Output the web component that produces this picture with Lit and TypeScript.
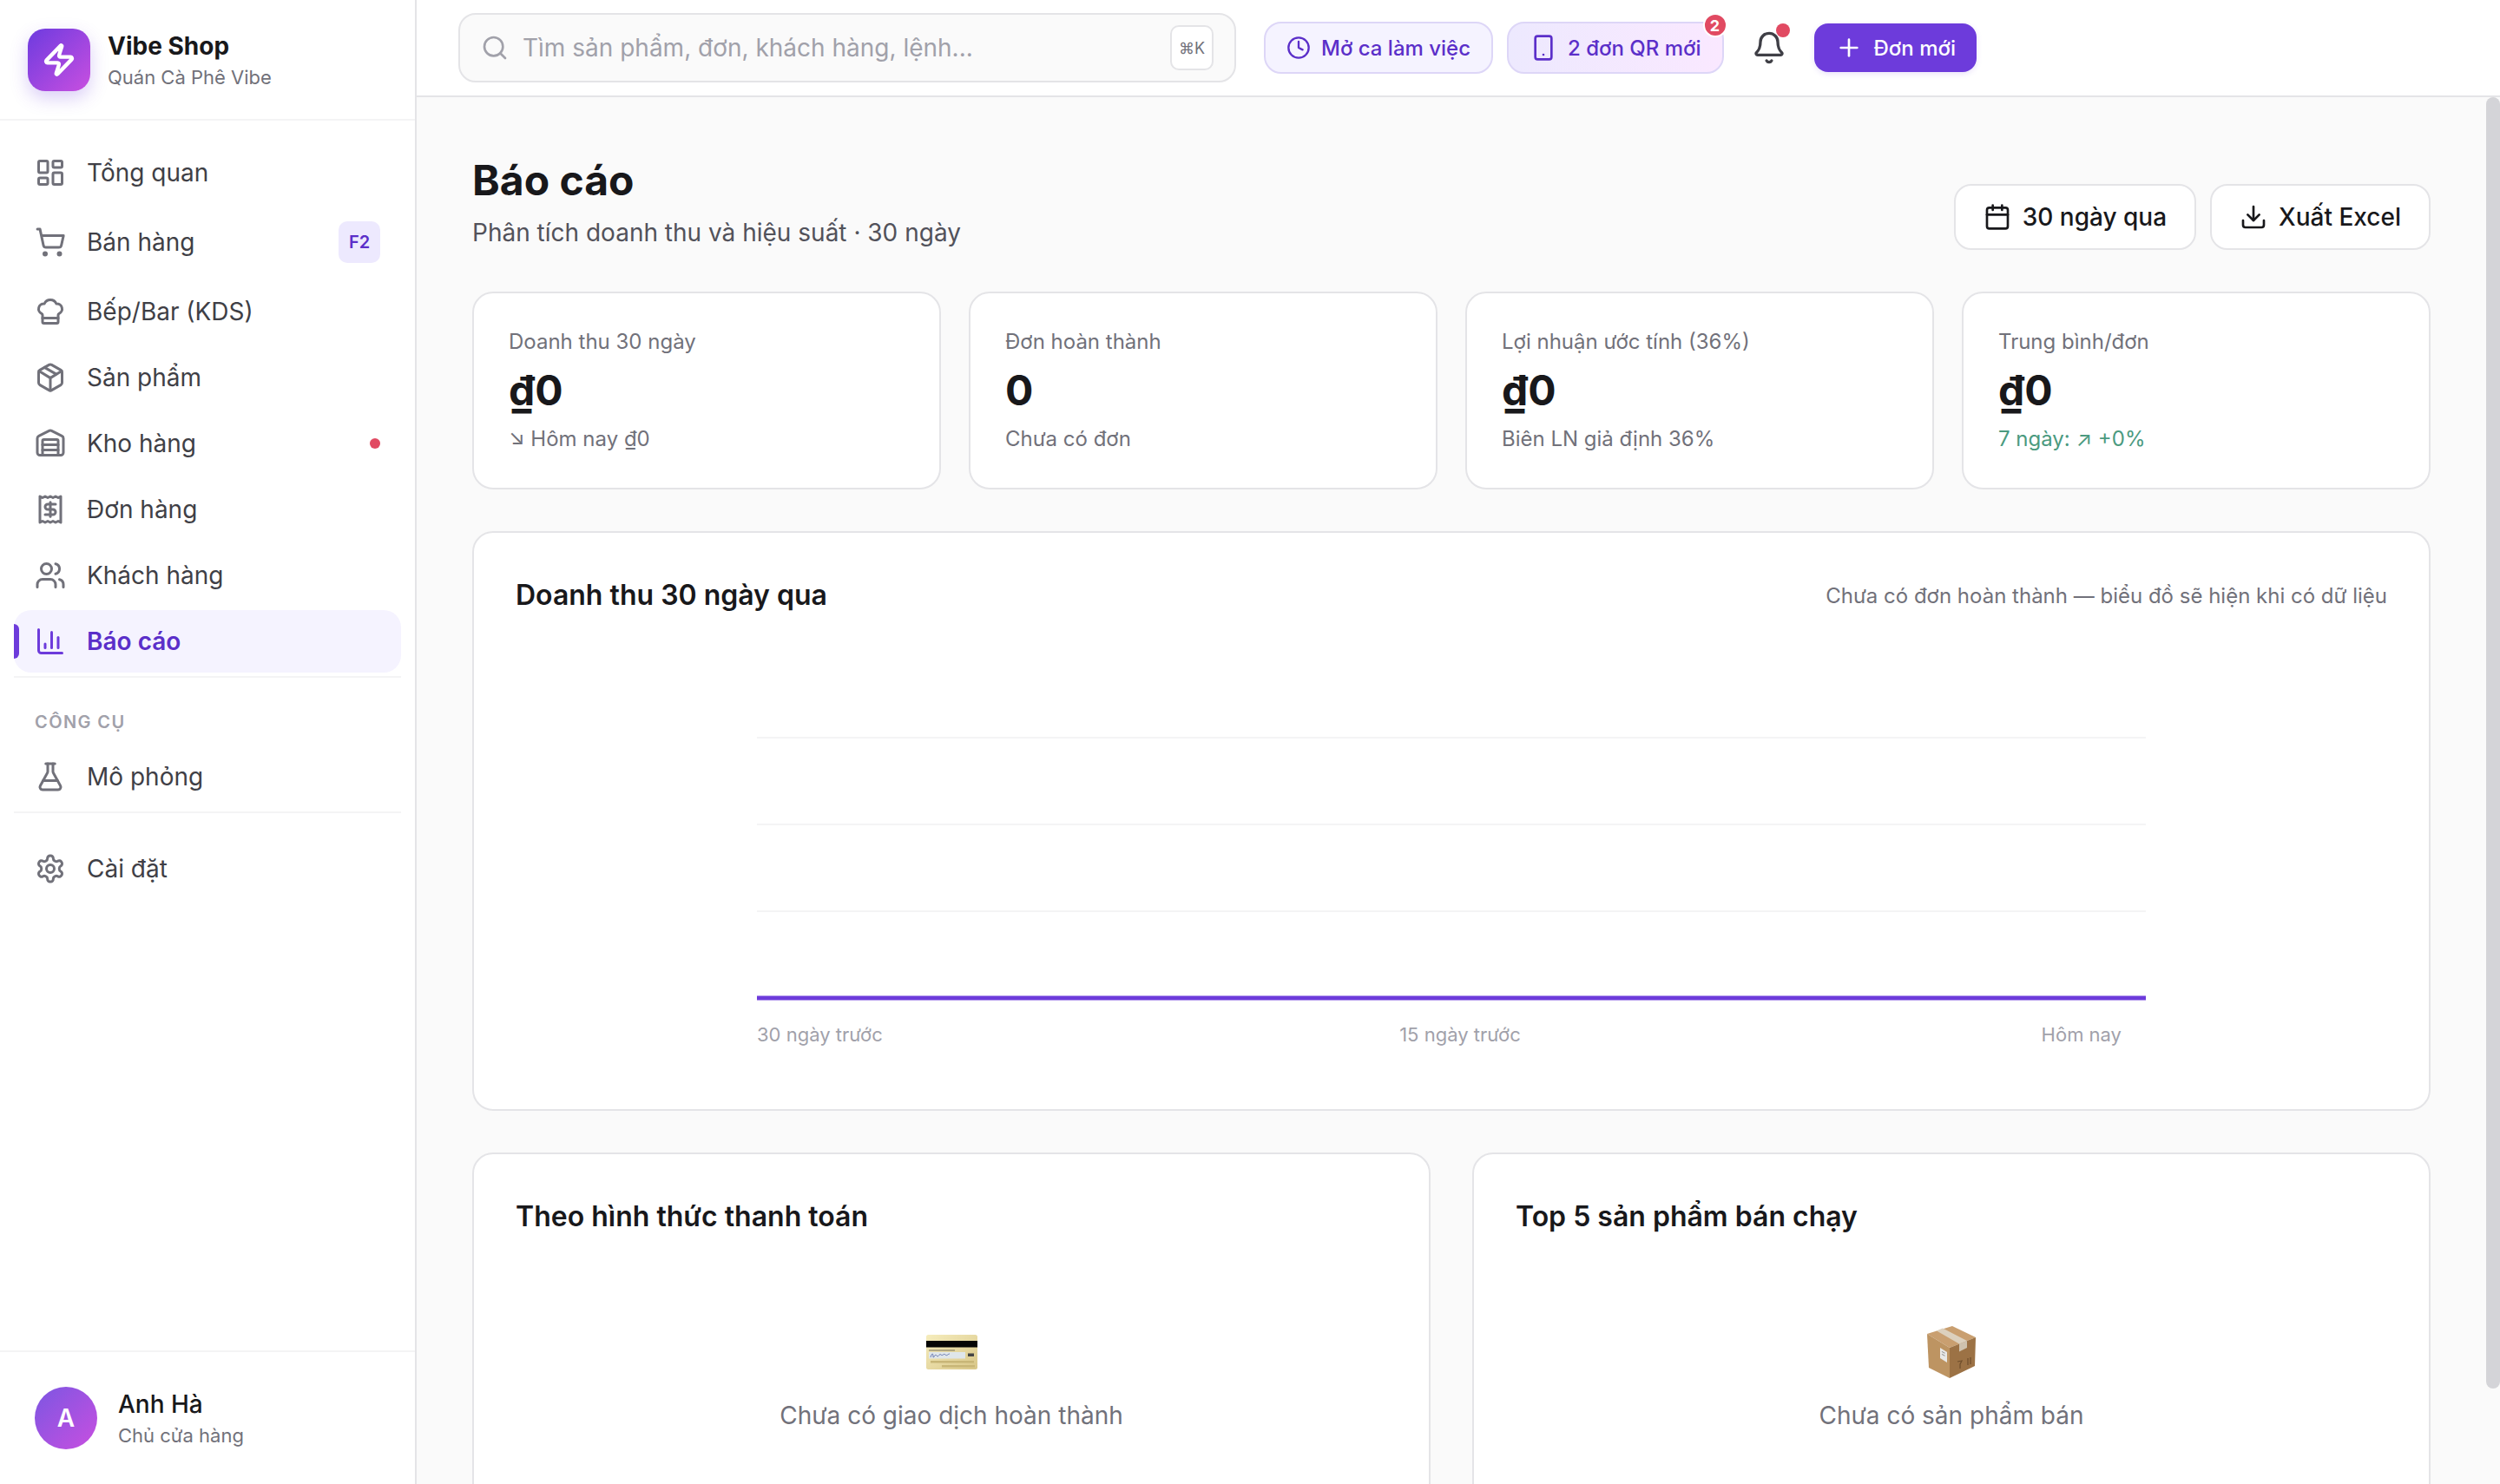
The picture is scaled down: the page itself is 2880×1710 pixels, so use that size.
import { LitElement, html, css, svg } from "lit";
import { customElement } from "lit/decorators.js";

const ic: Record<string, unknown> = {
  dash: svg`<rect x="3" y="3" width="7" height="9" rx="1"/><rect x="14" y="3" width="7" height="5" rx="1"/><rect x="14" y="12" width="7" height="9" rx="1"/><rect x="3" y="16" width="7" height="5" rx="1"/>`,
  cart: svg`<circle cx="8" cy="21" r="1"/><circle cx="19" cy="21" r="1"/><path d="M2.05 2.05h2l2.66 12.42a2 2 0 0 0 2 1.58h9.78a2 2 0 0 0 1.95-1.57l1.65-7.43H5.12"/>`,
  chef: svg`<path d="M17 21a1 1 0 0 0 1-1v-5.35c0-.457.316-.844.727-1.041a4 4 0 0 0-2.134-7.589 5 5 0 0 0-9.186 0 4 4 0 0 0-2.134 7.588c.411.198.727.585.727 1.041V20a1 1 0 0 0 1 1Z"/><path d="M6 17h12"/>`,
  pkg: svg`<path d="M11 21.73a2 2 0 0 0 2 0l7-4A2 2 0 0 0 21 16V8a2 2 0 0 0-1-1.73l-7-4a2 2 0 0 0-2 0l-7 4A2 2 0 0 0 3 8v8a2 2 0 0 0 1 1.73z"/><path d="M12 22V12"/><path d="m3.3 7 7.703 4.734a2 2 0 0 0 1.994 0L20.7 7"/><path d="m7.5 4.27 9 5.15"/>`,
  ware: svg`<path d="M18 21V10a1 1 0 0 0-1-1H7a1 1 0 0 0-1 1v11"/><path d="M22 19a2 2 0 0 1-2 2H4a2 2 0 0 1-2-2V8a2 2 0 0 1 1.132-1.803l7.95-3.974a2 2 0 0 1 1.837 0l7.948 3.974A2 2 0 0 1 22 8z"/><path d="M6 13h12"/><path d="M6 17h12"/>`,
  rcpt: svg`<path d="M4 2v20l2-1 2 1 2-1 2 1 2-1 2 1 2-1 2 1V2l-2 1-2-1-2 1-2-1-2 1-2-1-2 1Z"/><path d="M16 8h-6a2 2 0 1 0 0 4h4a2 2 0 1 1 0 4H8"/><path d="M12 17.5v-11"/>`,
  users: svg`<path d="M16 21v-2a4 4 0 0 0-4-4H6a4 4 0 0 0-4 4v2"/><circle cx="9" cy="7" r="4"/><path d="M22 21v-2a4 4 0 0 0-3-3.87"/><path d="M16 3.13a4 4 0 0 1 0 7.75"/>`,
  chart: svg`<path d="M3 3v16a2 2 0 0 0 2 2h16"/><path d="M18 17V9"/><path d="M13 17V5"/><path d="M8 17v-3"/>`,
  flask: svg`<path d="M14 2v6a2 2 0 0 0 .245.96l5.51 10.08A2 2 0 0 1 18 22H6a2 2 0 0 1-1.755-2.96l5.51-10.08A2 2 0 0 0 10 8V2"/><path d="M6.453 15h11.094"/><path d="M8.5 2h7"/>`,
  gear: svg`<path d="M12.22 2h-.44a2 2 0 0 0-2 2v.18a2 2 0 0 1-1 1.73l-.43.25a2 2 0 0 1-2 0l-.15-.08a2 2 0 0 0-2.73.73l-.22.38a2 2 0 0 0 .73 2.73l.15.1a2 2 0 0 1 1 1.72v.51a2 2 0 0 1-1 1.74l-.15.09a2 2 0 0 0-.73 2.73l.22.38a2 2 0 0 0 2.73.73l.15-.08a2 2 0 0 1 2 0l.43.25a2 2 0 0 1 1 1.73V20a2 2 0 0 0 2 2h.44a2 2 0 0 0 2-2v-.18a2 2 0 0 1 1-1.73l.43-.25a2 2 0 0 1 2 0l.15.08a2 2 0 0 0 2.73-.73l.22-.39a2 2 0 0 0-.73-2.73l-.15-.08a2 2 0 0 1-1-1.74v-.5a2 2 0 0 1 1-1.74l.15-.09a2 2 0 0 0 .73-2.73l-.22-.38a2 2 0 0 0-2.73-.73l-.15.08a2 2 0 0 1-2 0l-.43-.25a2 2 0 0 1-1-1.73V4a2 2 0 0 0-2-2z"/><circle cx="12" cy="12" r="3"/>`,
  zap: svg`<path d="M4 14a1 1 0 0 1-.78-1.63l9.9-10.2a.5.5 0 0 1 .86.46l-1.92 6.02A1 1 0 0 0 13 10h7a1 1 0 0 1 .78 1.63l-9.9 10.2a.5.5 0 0 1-.86-.46l1.92-6.02A1 1 0 0 0 11 14z"/>`,
  search: svg`<path d="m21 21-4.34-4.34"/><circle cx="11" cy="11" r="8"/>`,
  clock: svg`<circle cx="12" cy="12" r="10"/><path d="M12 6v6l4 2"/>`,
  phone: svg`<rect x="5" y="2" width="14" height="20" rx="2"/><path d="M12 18h.01"/>`,
  bell: svg`<path d="M10.268 21a2 2 0 0 0 3.464 0"/><path d="M3.262 15.326A1 1 0 0 0 4 17h16a1 1 0 0 0 .74-1.673C19.41 13.956 18 12.499 18 8A6 6 0 0 0 6 8c0 4.499-1.411 5.956-2.738 7.326"/>`,
  plus: svg`<path d="M5 12h14"/><path d="M12 5v14"/>`,
  cal: svg`<path d="M8 2v4"/><path d="M16 2v4"/><rect x="3" y="4" width="18" height="18" rx="2"/><path d="M3 10h18"/>`,
  down: svg`<path d="M12 15V3"/><path d="M21 15v4a2 2 0 0 1-2 2H5a2 2 0 0 1-2-2v-4"/><path d="m7 10 5 5 5-5"/>`,
};

const icon = (name: string, size = 36, sw = 2) => html`<svg class="ico" width=${size} height=${size} viewBox="0 0 24 24" fill="none" stroke="currentColor" stroke-width=${sw} stroke-linecap="round" stroke-linejoin="round">${ic[name]}</svg>`;

const cardEmoji = html`<svg class="emoji" width="72" height="72" viewBox="0 0 72 72" aria-hidden="true">
  <defs><linearGradient id="cg" x1="0" y1="0" x2="1" y2="1"><stop offset="0" stop-color="#f6edbd"/><stop offset="1" stop-color="#d8c688"/></linearGradient></defs>
  <rect x="7" y="16" width="59" height="40" rx="2.5" fill="url(#cg)"/>
  <rect x="7" y="23" width="59" height="7.5" fill="#050505"/>
  <rect x="10" y="33.5" width="30" height="1" fill="#77705a"/>
  <rect x="10" y="36" width="42" height="7.5" fill="#dfe6ea"/>
  <path d="M12 42c1.5-5 3-5 3-1s2-4 4-1 3-3 5-1 3-2 5 0 3-1 5-1" fill="none" stroke="#5a6ba8" stroke-width=".9"/>
  <rect x="55" y="37.5" width="7" height="3.5" fill="#444"/>
  <rect x="12" y="46" width="50" height="2.5" fill="#c8b677"/>
  <rect x="25" y="51" width="38" height="2.5" fill="#c8b677"/>
</svg>`;

const boxEmoji = html`<svg class="emoji" width="72" height="72" viewBox="0 0 72 72" aria-hidden="true">
  <polygon points="8,15 37,6 64,19 34,31" fill="#c99f70"/>
  <polygon points="8,15 34,31 34,66 10,54" fill="#bd9462"/>
  <polygon points="34,31 64,19 63,52 34,66" fill="#9c7245"/>
  <polygon points="19,11.5 26,8.5 54,23 45,26.6" fill="#dcd0bd"/>
  <polygon points="45,26.6 54,23 54,31 45,35.6" fill="#cfc2ae"/>
  <polygon points="23,31 31,36 31,48 23,43" fill="#e8e8e6"/>
  <rect x="25" y="36" width="4" height="1" fill="#8f8f8f" transform="rotate(30 27 36)"/>
  <rect x="25" y="39" width="4" height="1" fill="#8f8f8f" transform="rotate(30 27 39)"/>
  <path d="M43 47l5-1-2 4v5M55 43v8M58 42v8" fill="none" stroke="#6f4e2c" stroke-width="1.2"/>
</svg>`;

@customElement("app-root")
export class AppRoot extends LitElement {
  static styles = css`
    :host { display: flex; height: 100vh; overflow: hidden; font-family: Inter, "Liberation Sans", sans-serif; color: #18181b; background: #fafafa; }
    * { box-sizing: border-box; }
    .ico { display: block; flex: none; }
    .sidebar { width: 480px; flex: none; height: 100%; background: #fff; border-right: 2px solid #e4e4e7; display: flex; flex-direction: column; }
    .brand { height: 139px; flex: none; padding: 33px 32px 0; display: flex; gap: 20px; border-bottom: 2px solid #f4f4f5; }
    .logo { width: 72px; height: 72px; border-radius: 20px; background: linear-gradient(135deg, #6d3bdf, #c84fe0); box-shadow: 0 8px 20px rgba(109, 59, 223, .25); color: #fff; display: flex; align-items: center; justify-content: center; }
    .brand-name { font-size: 28px; font-weight: 700; line-height: 38px; margin-top: 1px; }
    .brand-sub { font-size: 22px; color: #71717a; line-height: 30px; margin-top: 2px; }
    nav { padding: 24px 16px 0; display: flex; flex-direction: column; }
    .row { position: relative; display: flex; align-items: center; gap: 24px; padding: 16px 24px; margin-bottom: 4px; border-radius: 20px; font-size: 28px; line-height: 40px; color: #3f3f46; }
    .row .ico { color: #71717a; }
    .row.active { background: #f5f3ff; color: #5b2fc9; font-weight: 600; }
    .row.active .ico { color: #6d3bdb; }
    .row.active::before { content: ""; position: absolute; left: 0; top: 16px; bottom: 16px; width: 6px; border-radius: 0 6px 6px 0; background: #6d3bdb; }
    .badge { margin-left: auto; width: 48px; height: 48px; border-radius: 10px; background: #ede9fe; color: #5b2fc9; font-size: 20px; font-weight: 600; display: flex; align-items: center; justify-content: center; }
    .dot { margin-left: auto; width: 12px; height: 12px; border-radius: 50%; background: #e14a62; }
    .nav-div { height: 2px; background: #f4f4f5; flex: none; }
    .nav-div.spaced { margin-bottom: 28px; }
    .group { font-size: 20px; font-weight: 600; letter-spacing: 1.4px; color: #a1a1aa; padding: 0 24px; line-height: 28px; margin: 37px 0 13px; }
    .user { margin-top: auto; height: 154px; flex: none; border-top: 2px solid #f4f4f5; padding: 40px 40px 0; display: flex; gap: 24px; }
    .avatar { width: 72px; height: 72px; border-radius: 50%; background: linear-gradient(135deg, #7c56e2, #c84fe0); color: #fff; font-size: 28px; font-weight: 600; display: flex; align-items: center; justify-content: center; }
    .user-name { font-size: 28px; font-weight: 500; line-height: 40px; }
    .user-role { font-size: 22px; color: #71717a; line-height: 32px; }

    .col { flex: 1; min-width: 0; display: flex; flex-direction: column; height: 100%; position: relative; }
    .topbar { height: 112px; flex: none; background: #fff; border-bottom: 2px solid #e4e4e7; padding: 0 48px; display: flex; align-items: center; }
    .search { width: 896px; height: 80px; flex: none; border: 2px solid #e4e4e7; background: #fafafa; border-radius: 20px; display: flex; align-items: center; padding: 0 24px; gap: 16px; color: #a1a1aa; font-size: 28px; }
    .search .ph { flex: 1; }
    kbd { font-family: inherit; width: 50px; height: 52px; border: 2px solid #e4e4e7; background: #fff; border-radius: 10px; font-size: 18px; color: #71717a; display: flex; align-items: center; justify-content: center; }
    .pills { display: flex; align-items: center; gap: 16px; margin-left: 32px; }
    .pill { height: 60px; border-radius: 20px; border: 2px solid #ddd6f7; background: #f5f3ff; color: #5b2fc9; font-size: 24px; font-weight: 500; display: flex; align-items: center; gap: 12px; padding: 0 24px; position: relative; white-space: nowrap; }
    .pill.qr { background: linear-gradient(90deg, #ede9fe, #fae8ff); }
    .count { position: absolute; top: -12px; right: -6px; width: 28px; height: 28px; border-radius: 50%; border: 2px solid #fff; background: #e14a62; color: #fff; font-size: 18px; font-weight: 700; display: flex; align-items: center; justify-content: center; }
    .bell { width: 72px; height: 72px; position: relative; display: flex; align-items: center; justify-content: center; color: #3f3f46; }
    .bell i { position: absolute; top: 8px; right: 12px; width: 16px; height: 16px; border-radius: 50%; background: #e14a62; }
    .new { height: 56px; border-radius: 16px; background: #6d3bdb; color: #fff; font-size: 24px; font-weight: 500; display: flex; align-items: center; gap: 13px; padding: 0 24px; box-shadow: 0 2px 6px rgba(109, 59, 219, .15); white-space: nowrap; }

    .main { flex: 1; min-height: 0; overflow: hidden; background: #fafafa; padding: 65px 80px 64px 64px; }
    .thumb { position: absolute; right: 0; top: 112px; width: 16px; height: 1488px; background: #d4d4d8; border-radius: 8px; }
    .head { display: flex; justify-content: space-between; align-items: flex-end; margin-bottom: 48px; }
    h1 { margin: 0; font-size: 48px; font-weight: 700; line-height: 62px; }
    .sub { font-size: 28px; line-height: 40px; color: #52525b; margin-top: 9px; }
    .actions { display: flex; gap: 16px; }
    .btn { height: 76px; border: 2px solid #e4e4e7; background: #fff; border-radius: 20px; padding: 0 32px; display: flex; align-items: center; gap: 14px; font-size: 28px; font-weight: 500; white-space: nowrap; }
    .btn .ico { margin-right: -1px; }
    .kpis { display: grid; grid-template-columns: repeat(4, 1fr); gap: 32px; margin-bottom: 48px; }
    .kpi { height: 228px; background: #fff; border: 2px solid #e4e4e7; border-radius: 24px; padding: 40px; }
    .kpi-l { font-size: 24px; line-height: 32px; color: #71717a; }
    .kpi-v { font-size: 48px; font-weight: 700; line-height: 60px; margin-top: 10px; }
    .kpi-s { font-size: 24px; line-height: 34px; color: #71717a; margin-top: 9px; }
    .kpi-s.up { color: #4b9a7f; }
    .card { background: #fff; border: 2px solid #e4e4e7; border-radius: 24px; padding: 48px; }
    .card-h { display: flex; justify-content: space-between; align-items: center; }
    h2 { margin: 0; font-size: 32px; font-weight: 600; line-height: 48px; }
    .hint { font-size: 24px; color: #71717a; }
    .chart { height: 668px; margin-bottom: 48px; }
    .plot { display: block; margin: 0 auto; }
    .plot text { font-family: Inter, "Liberation Sans", sans-serif; font-size: 22px; fill: #a1a1aa; }
    .two { display: grid; grid-template-columns: 1fr 1fr; gap: 48px; }
    .empty { padding: 96px 0; display: flex; flex-direction: column; align-items: center; gap: 17px; color: #71717a; font-size: 28px; line-height: 40px; }
    .emoji { display: block; }
  `;

  private navItem(icn: string, label: string, extra: unknown = null, active = false) {
    return html`<div class="row ${active ? "active" : ""}">${icon(icn)}<span>${label}</span>${extra}</div>`;
  }

  private kpi(label: string, value: string, sub: string, up = false) {
    return html`<div class="kpi"><div class="kpi-l">${label}</div><div class="kpi-v">${value}</div><div class="kpi-s ${up ? "up" : ""}">${sub}</div></div>`;
  }

  render() {
    return html`
      <aside class="sidebar">
        <div class="brand">
          <div class="logo">${icon("zap", 40, 2.6)}</div>
          <div><div class="brand-name">Vibe Shop</div><div class="brand-sub">Quán Cà Phê Vibe</div></div>
        </div>
        <nav>
          ${this.navItem("dash", "Tổng quan")}
          ${this.navItem("cart", "Bán hàng", html`<span class="badge">F2</span>`)}
          ${this.navItem("chef", "Bếp/Bar (KDS)")}
          ${this.navItem("pkg", "Sản phẩm")}
          ${this.navItem("ware", "Kho hàng", html`<span class="dot"></span>`)}
          ${this.navItem("rcpt", "Đơn hàng")}
          ${this.navItem("users", "Khách hàng")}
          ${this.navItem("chart", "Báo cáo", null, true)}
          <div class="nav-div"></div>
          <div class="group">CÔNG CỤ</div>
          ${this.navItem("flask", "Mô phỏng")}
          <div class="nav-div spaced"></div>
          ${this.navItem("gear", "Cài đặt")}
        </nav>
        <div class="user">
          <div class="avatar">A</div>
          <div><div class="user-name">Anh Hà</div><div class="user-role">Chủ cửa hàng</div></div>
        </div>
      </aside>
      <div class="col">
        <header class="topbar">
          <div class="search">${icon("search", 32)}<span class="ph">Tìm sản phẩm, đơn, khách hàng, lệnh...</span><kbd>⌘K</kbd></div>
          <div class="pills">
            <div class="pill">${icon("clock", 28)}Mở ca làm việc</div>
            <div class="pill qr">${icon("phone", 32)}2 đơn QR mới<span class="count">2</span></div>
            <div class="bell">${icon("bell", 40)}<i></i></div>
            <div class="new">${icon("plus", 32)}Đơn mới</div>
          </div>
        </header>
        <main class="main">
          <div class="head">
            <div><h1>Báo cáo</h1><div class="sub">Phân tích doanh thu và hiệu suất · 30 ngày</div></div>
            <div class="actions">
              <div class="btn">${icon("cal", 32)}30 ngày qua</div>
              <div class="btn">${icon("down", 32)}Xuất Excel</div>
            </div>
          </div>
          <div class="kpis">
            ${this.kpi("Doanh thu 30 ngày", "₫0", "↘ Hôm nay ₫0")}
            ${this.kpi("Đơn hoàn thành", "0", "Chưa có đơn")}
            ${this.kpi("Lợi nhuận ước tính (36%)", "₫0", "Biên LN giả định 36%")}
            ${this.kpi("Trung bình/đơn", "₫0", "7 ngày: ↗ +0%", true)}
          </div>
          <section class="card chart">
            <div class="card-h"><h2>Doanh thu 30 ngày qua</h2><span class="hint">Chưa có đơn hoàn thành — biểu đồ sẽ hiện khi có dữ liệu</span></div>
            <svg class="plot" width="1600" height="520" viewBox="0 0 1600 520">
              <line x1="0" x2="1600" y1="140" y2="140" stroke="#f4f4f5" stroke-width="2"/>
              <line x1="0" x2="1600" y1="240" y2="240" stroke="#f4f4f5" stroke-width="2"/>
              <line x1="0" x2="1600" y1="340" y2="340" stroke="#f4f4f5" stroke-width="2"/>
              <line x1="0" x2="1600" y1="440" y2="440" stroke="#6d3bdb" stroke-width="5"/>
              <text x="0" y="490">30 ngày trước</text>
              <text x="810" y="490" text-anchor="middle">15 ngày trước</text>
              <text x="1572" y="490" text-anchor="end">Hôm nay</text>
            </svg>
          </section>
          <div class="two">
            <section class="card"><h2>Theo hình thức thanh toán</h2><div class="empty">${cardEmoji}<span>Chưa có giao dịch hoàn thành</span></div></section>
            <section class="card"><h2>Top 5 sản phẩm bán chạy</h2><div class="empty">${boxEmoji}<span>Chưa có sản phẩm bán</span></div></section>
          </div>
        </main>
        <div class="thumb"></div>
      </div>
    `;
  }
}
